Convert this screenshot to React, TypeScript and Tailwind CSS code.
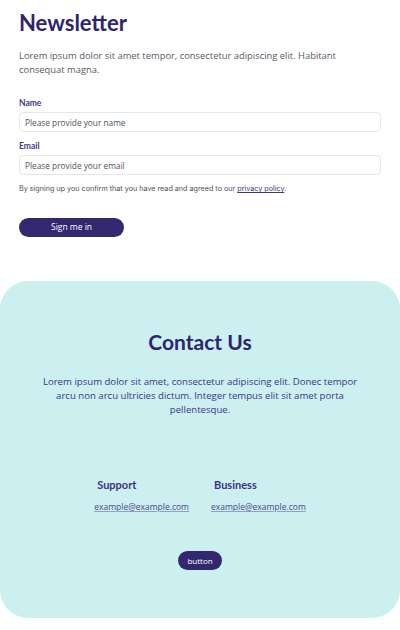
import React from 'react';

const heading = { fontFamily: 'Lato, "Noto Sans", sans-serif' };
const body = { fontFamily: '"Open Sans", "Noto Sans", sans-serif' };

export default function App() {
  return (
    <div className="w-[400px] min-h-[630px] bg-white" style={body}>
      {/* Newsletter */}
      <section className="px-[19px] pt-[10px] pb-[44px]">
        <h1 className="text-[22px] leading-[26px] font-bold text-[#2e2470]" style={heading}>
          Newsletter
        </h1>
        <p className="mt-[13px] text-[9.4px] leading-[13.5px] text-[#555b66]">
          Lorem ipsum dolor sit amet tempor, consectetur adipiscing elit. Habitant consequat magna.
        </p>

        <form className="mt-[21px] flex flex-col" onSubmit={(e) => e.preventDefault()}>
          <label className="text-[8.5px] leading-[12px] font-bold text-[#45398a]" style={heading}>Name</label>
          <input
            type="text"
            placeholder="Please provide your name"
            className="mt-[3px] h-[20px] w-full rounded-[4px] border border-[#e6e7eb] px-[5px] text-[8.3px] text-gray-700 placeholder:text-[#50545c] focus:outline-none"
          />
          <label className="mt-[8px] text-[8.5px] leading-[12px] font-bold text-[#45398a]" style={heading}>Email</label>
          <input
            type="email"
            placeholder="Please provide your email"
            className="mt-[3px] h-[20px] w-full rounded-[4px] border border-[#e6e7eb] px-[5px] text-[8.3px] text-gray-700 placeholder:text-[#50545c] focus:outline-none"
          />
          <p className="mt-[9px] text-[7.2px] leading-[10px] text-[#4d5159]" style={{ fontFamily: 'Inter, sans-serif' }}>
            By signing up you confirm that you have read and agreed to our{' '}
            <a href="#" className="text-[#3f3583] underline">privacy policy</a>.
          </p>
          <button
            type="submit"
            className="mt-[24px] h-[19px] w-[105px] rounded-full bg-[#33286f] text-[8.5px] text-white"
          >
            Sign me in
          </button>
        </form>
      </section>

      {/* Contact */}
      <section className="rounded-[28px] bg-[#cceff0] px-[40px] pt-[48px] pb-[48px] text-center">
        <h2 className="text-[21px] leading-[26px] font-bold text-[#2e2470]" style={heading}>
          Contact Us
        </h2>
        <p className="mt-[19.5px] text-[9.6px] leading-[14px] text-[#3c3688]">
          Lorem ipsum dolor sit amet, consectetur adipiscing elit. Donec tempor arcu non arcu ultricies dictum. Integer tempus elit sit amet porta pellentesque.
        </p>

        <div className="mt-[61px] flex justify-center gap-[22px] text-left">
          <div className="flex flex-col">
            <h3 className="pl-[3px] text-[11px] leading-[14px] font-bold text-[#3a3385]" style={heading}>Support</h3>
            <a href="#" className="mt-[9.5px] text-[8.5px] leading-[12px] text-[#4a4a8a] underline decoration-[#9a9ac4]">example@example.com</a>
          </div>
          <div className="flex flex-col">
            <h3 className="pl-[3px] text-[11px] leading-[14px] font-bold text-[#3a3385]" style={heading}>Business</h3>
            <a href="#" className="mt-[9.5px] text-[8.5px] leading-[12px] text-[#4a4a8a] underline decoration-[#9a9ac4]">example@example.com</a>
          </div>
        </div>

        <button className="mt-[38px] h-[19px] w-[44px] rounded-full bg-[#33286f] text-[8px] text-white">
          button
        </button>
      </section>
    </div>
  );
}
